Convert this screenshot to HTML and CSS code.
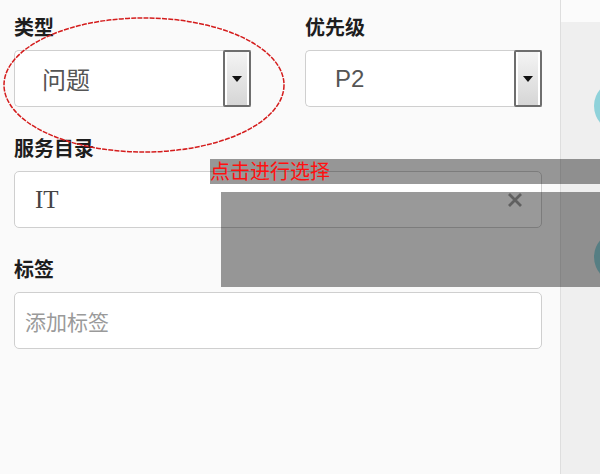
FILE: index.html
```html
<!DOCTYPE html>
<html lang="zh-CN">
<head>
    <meta charset="UTF-8">
    <meta name="viewport" content="width=device-width, initial-scale=1.0">
    <title>工单 - 基本信息</title>
    <link rel="stylesheet" href="styles.css">
</head>
<body>
    <div class="page">
        <main class="form-panel">
            <div class="row-two">
                <div class="field">
                    <div class="field-label">类型</div>
                    <div class="select">
                        <span class="select-value">问题</span>
                        <span class="drop-btn"><i class="caret"></i></span>
                    </div>
                </div>
                <div class="field">
                    <div class="field-label">优先级</div>
                    <div class="select">
                        <span class="select-value latin">P2</span>
                        <span class="drop-btn"><i class="caret"></i></span>
                    </div>
                </div>
            </div>

            <div class="field catalog">
                <div class="field-label">服务目录</div>
                <div class="input">
                    <span class="input-value">IT</span>
                    <svg class="clear" width="16" height="16" viewBox="0 0 16 16">
                        <path d="M2 2 L14 14 M14 2 L2 14" stroke="#a0a0a0" stroke-width="2.8" fill="none"/>
                    </svg>
                </div>
            </div>

            <div class="field tags">
                <div class="field-label">标签</div>
                <div class="input">
                    <span class="placeholder">添加标签</span>
                </div>
            </div>
        </main>

        <aside class="side">
            <div class="side-head"></div>
            <div class="side-body">
                <span class="avatar"></span>
                <span class="avatar"></span>
            </div>
        </aside>

        <!-- annotation layer -->
        <svg class="mark-ellipse" width="300" height="170" viewBox="0 0 300 170">
            <ellipse cx="144" cy="85" rx="140" ry="67" fill="none" stroke="#d41c1c" stroke-width="1.5" stroke-dasharray="5 1.2"/>
        </svg>
        <div class="mask mask-tip">点击进行选择</div>
        <div class="mask mask-area"></div>
    </div>
</body>
</html>
```

FILE: styles.css
```css
body {
    margin: 0;
    font-family: "Noto Sans CJK SC", "Liberation Sans", sans-serif;
    background-color: #fafafa;
}
.page {
    position: relative;
    display: flex;
    width: 600px;
    height: 474px;
    overflow: hidden;
    background-color: #fafafa;
}
.form-panel {
    width: 561px;
    box-sizing: border-box;
    padding: 14px 18px 0 14px;
    border-right: 1px solid #dedede;
}
.row-two {
    display: grid;
    grid-template-columns: 237px 237px;
    column-gap: 54px;
}
.field-label {
    font-size: 20px;
    font-weight: bold;
    line-height: 26px;
    height: 26px;
    color: #1e1e1e;
    margin-bottom: 10px;
}
.select {
    display: flex;
    height: 57px;
    box-sizing: border-box;
    background-color: #fff;
    border: 1px solid #cfcfcf;
    border-right: none;
    border-radius: 5px 0 0 5px;
}
.select-value {
    flex: 1;
    display: flex;
    align-items: center;
    padding-left: 27px;
    font-size: 24px;
    color: #555;
}
.select-value.latin {
    padding-left: 29px;
    font-family: "Liberation Sans", sans-serif;
    font-size: 24px;
}
.drop-btn {
    width: 28px;
    margin: -1px 0;
    box-sizing: border-box;
    display: flex;
    align-items: center;
    justify-content: center;
    border: 2px solid #6e6e6e;
    border-radius: 2px;
    background: linear-gradient(to bottom, #f4f4f4, #e2e2e2 60%, #d6d6d6);
    box-shadow: inset 2px 0 0 #fff, inset -2px 0 0 #fff;
}
.caret {
    width: 0;
    height: 0;
    border-left: 5px solid transparent;
    border-right: 5px solid transparent;
    border-top: 6px solid #111;
}
.catalog {
    margin-top: 28px;
}
.tags {
    margin-top: 28px;
}
.catalog .field-label,
.tags .field-label {
    margin-bottom: 10px;
}
.input {
    display: flex;
    align-items: center;
    height: 57px;
    box-sizing: border-box;
    background-color: #fff;
    border: 1px solid #cfcfcf;
    border-radius: 5px;
}
.input-value {
    flex: 1;
    padding-left: 20px;
    font-family: "Liberation Serif", serif;
    font-size: 25px;
    color: #444;
}
.clear {
    margin-right: 18px;
}
.placeholder {
    padding-left: 10px;
    font-size: 21px;
    color: #9a9a9a;
}
.side {
    flex: 1;
    display: flex;
    flex-direction: column;
    overflow: hidden;
    background-color: #efefef;
}
.side-head {
    height: 22px;
    background-color: #fbfbfb;
}
.side-body {
    display: flex;
    flex-direction: column;
    padding: 58px 0 0 33px;
    gap: 99px;
}
.avatar {
    flex-shrink: 0;
    width: 52px;
    height: 52px;
    border-radius: 50%;
    background-color: #8fd2da;
}
.mark-ellipse {
    position: absolute;
    left: 0;
    top: 0;
    pointer-events: none;
}
.mask {
    position: absolute;
    right: 0;
    background-color: rgba(0, 0, 0, 0.4);
}
.mask-tip {
    left: 210px;
    top: 159px;
    height: 25px;
    font-size: 20px;
    line-height: 24px;
    color: #ff1010;
}
.mask-area {
    left: 221px;
    top: 192px;
    height: 95px;
}
```
